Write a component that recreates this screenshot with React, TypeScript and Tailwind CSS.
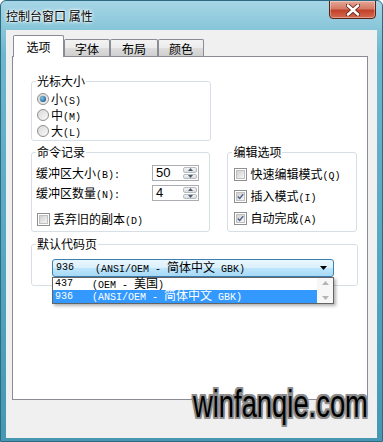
import React from 'react';

const mono = "font-['Liberation_Mono',monospace] text-[10px]";

const Acc: React.FC<{ children: React.ReactNode }> = ({ children }) => (
  <span className={mono}>{children}</span>
);

const Radio: React.FC<{ checked?: boolean }> = ({ checked }) => (
  <span className="flex w-[12px] h-[12px] shrink-0 items-center justify-center rounded-full border border-[#8e8f8f] bg-[linear-gradient(135deg,#d8d8d8,#fafafa)]">
    {checked && (
      <span className="w-[6px] h-[6px] rounded-full bg-[radial-gradient(circle_at_35%_35%,#7cc4ee,#12456f)] shadow-[0_0_1px_#1a4b75]" />
    )}
  </span>
);

const Check: React.FC<{ checked?: boolean }> = ({ checked }) => (
  <span className="flex w-[13px] h-[13px] shrink-0 items-center justify-center border border-[#8e8f8f] bg-white p-px">
    <span className="flex w-full h-full items-center justify-center border border-[#c0c0c0] bg-[linear-gradient(135deg,#cfcfcf,#f6f6f6)]">
      {checked && (
        <svg width="9" height="9" viewBox="0 0 9 9">
          <path d="M1 4.5 L3.5 7 L8 1.5" fill="none" stroke="#4a5f8a" strokeWidth="1.8" />
        </svg>
      )}
    </span>
  </span>
);

const Spinner: React.FC<{ value: string }> = ({ value }) => (
  <div className="flex w-[47px] h-[16px] border border-[#abadb3] bg-white">
    <span className="flex-1 pl-[3px] leading-[14px] text-[13px] font-['Liberation_Sans',sans-serif] text-black">
      {value}
    </span>
    <div className="flex flex-col w-[15px] py-px pr-px gap-px">
      <div className="flex flex-1 items-center justify-center rounded-[2px] border border-[#b8bcc3] bg-[linear-gradient(#f6f6f6,#dcdcdc)]">
        <svg width="5" height="3" viewBox="0 0 5 3"><path d="M0 3 L2.5 0 L5 3Z" fill="#4d5b70" /></svg>
      </div>
      <div className="flex flex-1 items-center justify-center rounded-[2px] border border-[#b8bcc3] bg-[linear-gradient(#f6f6f6,#dcdcdc)]">
        <svg width="5" height="3" viewBox="0 0 5 3"><path d="M0 0 L2.5 3 L5 0Z" fill="#4d5b70" /></svg>
      </div>
    </div>
  </div>
);

const Group: React.FC<{ title: string; className?: string; children: React.ReactNode }> = ({ title, className, children }) => (
  <fieldset className={`border border-[#d5dfe5] rounded-[3px] min-w-0 ${className ?? ''}`}>
    <legend className="ml-[4px] px-px leading-[14px] text-[12px]">{title}</legend>
    {children}
  </fieldset>
);

export default function App() {
  return (
    <div className="relative w-[383px] h-[442px] overflow-hidden flex flex-col border border-[#2e6a82] rounded-t-[6px] bg-[linear-gradient(180deg,#a6d6e6_0%,#6cb7cd_12%,#54a6c0_60%,#4597b2_100%)] font-['Noto_Sans_CJK_SC',sans-serif] text-[12px] text-black">
      {/* title bar */}
      <div className="flex h-[29px] justify-between shrink-0">
        <span className="self-center pl-[5px] text-[12px] leading-[14px] text-black [text-shadow:0_0_5px_#fff,0_0_3px_#fff,0_0_2px_#fff]">
          控制台窗口 属性
        </span>
        <div className="mr-[6px] -mt-px flex w-[47px] h-[19px] items-center justify-center rounded-b-[4px] border border-[#5a2318] bg-[linear-gradient(180deg,#e6a797_0%,#d47a66_45%,#c2412a_55%,#d36a4f_100%)] shadow-[inset_0_0_0_1px_rgba(255,255,255,0.35)]">
          <svg width="14" height="12" viewBox="0 0 14 12">
            <path d="M2 1.5 L12 10.5 M12 1.5 L2 10.5" stroke="#5a1d12" strokeWidth="4.2" strokeLinecap="round" />
            <path d="M2 1.5 L12 10.5 M12 1.5 L2 10.5" stroke="#fff" strokeWidth="2.6" strokeLinecap="round" />
          </svg>
        </div>
      </div>

      {/* client area */}
      <div className="mx-[5px] h-[408px] bg-[#f0f0f0] pl-[6px] pr-[9px] pt-[5px]">
        {/* tabs */}
        <div className="flex h-[21px] items-end ml-px">
          <div className="relative z-10 -mb-px flex w-[51px] h-[22px] items-center justify-center rounded-t-[2px] border border-b-0 border-[#898c95] bg-white leading-[14px]">
            选项
          </div>
          {[
            ['字体', 'w-[46px]'],
            ['布局', 'w-[48px]'],
            ['颜色', 'w-[46px]'],
          ].map(([t, w]) => (
            <div
              key={t}
              className={`flex ${w} h-[17px] items-center justify-center rounded-t-[2px] border border-b-0 border-[#898c95] bg-[linear-gradient(180deg,#f3f3f3_0%,#ebebeb_50%,#dddddd_50%,#cfcfcf_100%)] leading-[14px] pt-px`}
            >
              {t}
            </div>
          ))}
        </div>

        {/* panel */}
        <div className="relative h-[344px] border border-[#898c95] bg-white pl-[18px] pr-[10px] pt-[17px]">
          <Group title="光标大小" className="w-[180px]">
            <div className="flex flex-col pl-[5px] pt-[3px] pb-px">
              <div className="flex h-[16px] items-center gap-[2px]"><Radio checked /><span>小<Acc>(S)</Acc></span></div>
              <div className="flex h-[16px] items-center gap-[2px]"><Radio /><span>中<Acc>(M)</Acc></span></div>
              <div className="flex h-[16px] items-center gap-[2px]"><Radio /><span>大<Acc>(L)</Acc></span></div>
            </div>
          </Group>

          <div className="mt-[4px] flex gap-[17px] items-stretch">
            <Group title="命令记录" className="w-[180px]">
              <div className="flex flex-col pl-[4px] pt-[5px] pb-[3px]">
                <div className="flex h-[18px] items-center">
                  <span className="w-[116px]">缓冲区大小<Acc>(B):</Acc></span>
                  <Spinner value="50" />
                </div>
                <div className="mt-[2px] flex h-[18px] items-center">
                  <span className="w-[116px]">缓冲区数量<Acc>(N):</Acc></span>
                  <Spinner value="4" />
                </div>
                <div className="mt-[9px] flex h-[16px] items-center gap-[3px] pl-px">
                  <Check />
                  <span>丢弃旧的副本<Acc>(D)</Acc></span>
                </div>
              </div>
            </Group>

            <Group title="编辑选项" className="w-[130px]">
              <div className="flex flex-col gap-[6px] pl-[6px] pt-[7px] pb-[5px]">
                <div className="flex h-[16px] items-center gap-[3px]"><Check /><span>快速编辑模式<Acc>(Q)</Acc></span></div>
                <div className="flex h-[16px] items-center gap-[3px]"><Check checked /><span>插入模式<Acc>(I)</Acc></span></div>
                <div className="flex h-[16px] items-center gap-[3px]"><Check checked /><span>自动完成<Acc>(A)</Acc></span></div>
              </div>
            </Group>
          </div>

          <Group title="默认代码页" className="mt-[5px] w-[327px]">
            <div className="pl-[20px] pt-[8px] pb-[8px]">
              <div className="relative w-[282px]">
                <div className="flex h-[18px] items-center rounded-[3px] border border-[#3c7fb1] bg-[linear-gradient(180deg,#eaf6fd_0%,#d9f0fc_50%,#bee6fd_50%,#a7d9f5_100%)] pl-[3px] pr-[6px] leading-[14px]">
                  <span className={`${mono} w-[39px]`}>936</span>
                  <span className="flex-1 whitespace-pre"><Acc>(ANSI/OEM - </Acc>简体中文<Acc> GBK)</Acc></span>
                  <svg width="7" height="4" viewBox="0 0 7 4"><path d="M0 0 L7 0 L3.5 4Z" fill="#000" /></svg>
                </div>
                <div className="absolute left-0 top-full z-20 flex w-[282px] h-[27px] border border-[#646464] bg-white shadow-[2px_2px_3px_rgba(0,0,0,0.3)] leading-[12px]">
                  <div className="flex flex-1 flex-col">
                    <div className="flex h-[12px] items-center pl-[2px]">
                      <span className={`${mono} w-[37px]`}>437</span>
                      <span className="whitespace-pre"><Acc>(OEM - </Acc>美国<Acc>)</Acc></span>
                    </div>
                    <div className="flex h-[13px] items-center pl-[2px] bg-[#3399ff] text-white">
                      <span className={`${mono} w-[37px]`}>936</span>
                      <span className="whitespace-pre"><Acc>(ANSI/OEM - </Acc>简体中文<Acc> GBK)</Acc></span>
                    </div>
                  </div>
                  <div className="flex w-[16px] flex-col items-center justify-between bg-[#f7f7f7] py-[3px]">
                    <svg width="7" height="4" viewBox="0 0 7 4"><path d="M0 4 L3.5 0 L7 4Z" fill="#b5b5b5" /></svg>
                    <svg width="7" height="4" viewBox="0 0 7 4"><path d="M0 0 L7 0 L3.5 4Z" fill="#b5b5b5" /></svg>
                  </div>
                </div>
              </div>
            </div>
          </Group>
        </div>
      </div>

      {/* watermark */}
      <div className="absolute left-[192px] top-[384px] origin-left scale-x-[0.72] font-['Liberation_Sans',sans-serif] text-[38px] leading-none text-black whitespace-nowrap [text-shadow:2px_0_#8c8c8c,-2px_0_#8c8c8c,0_2px_#8c8c8c,0_-2px_#8c8c8c,2px_2px_#8c8c8c,-2px_-2px_#8c8c8c,2px_-2px_#8c8c8c,-2px_2px_#8c8c8c,0_0_5px_#cfcfcf]">
        winfanqie.com
      </div>
    </div>
  );
}
